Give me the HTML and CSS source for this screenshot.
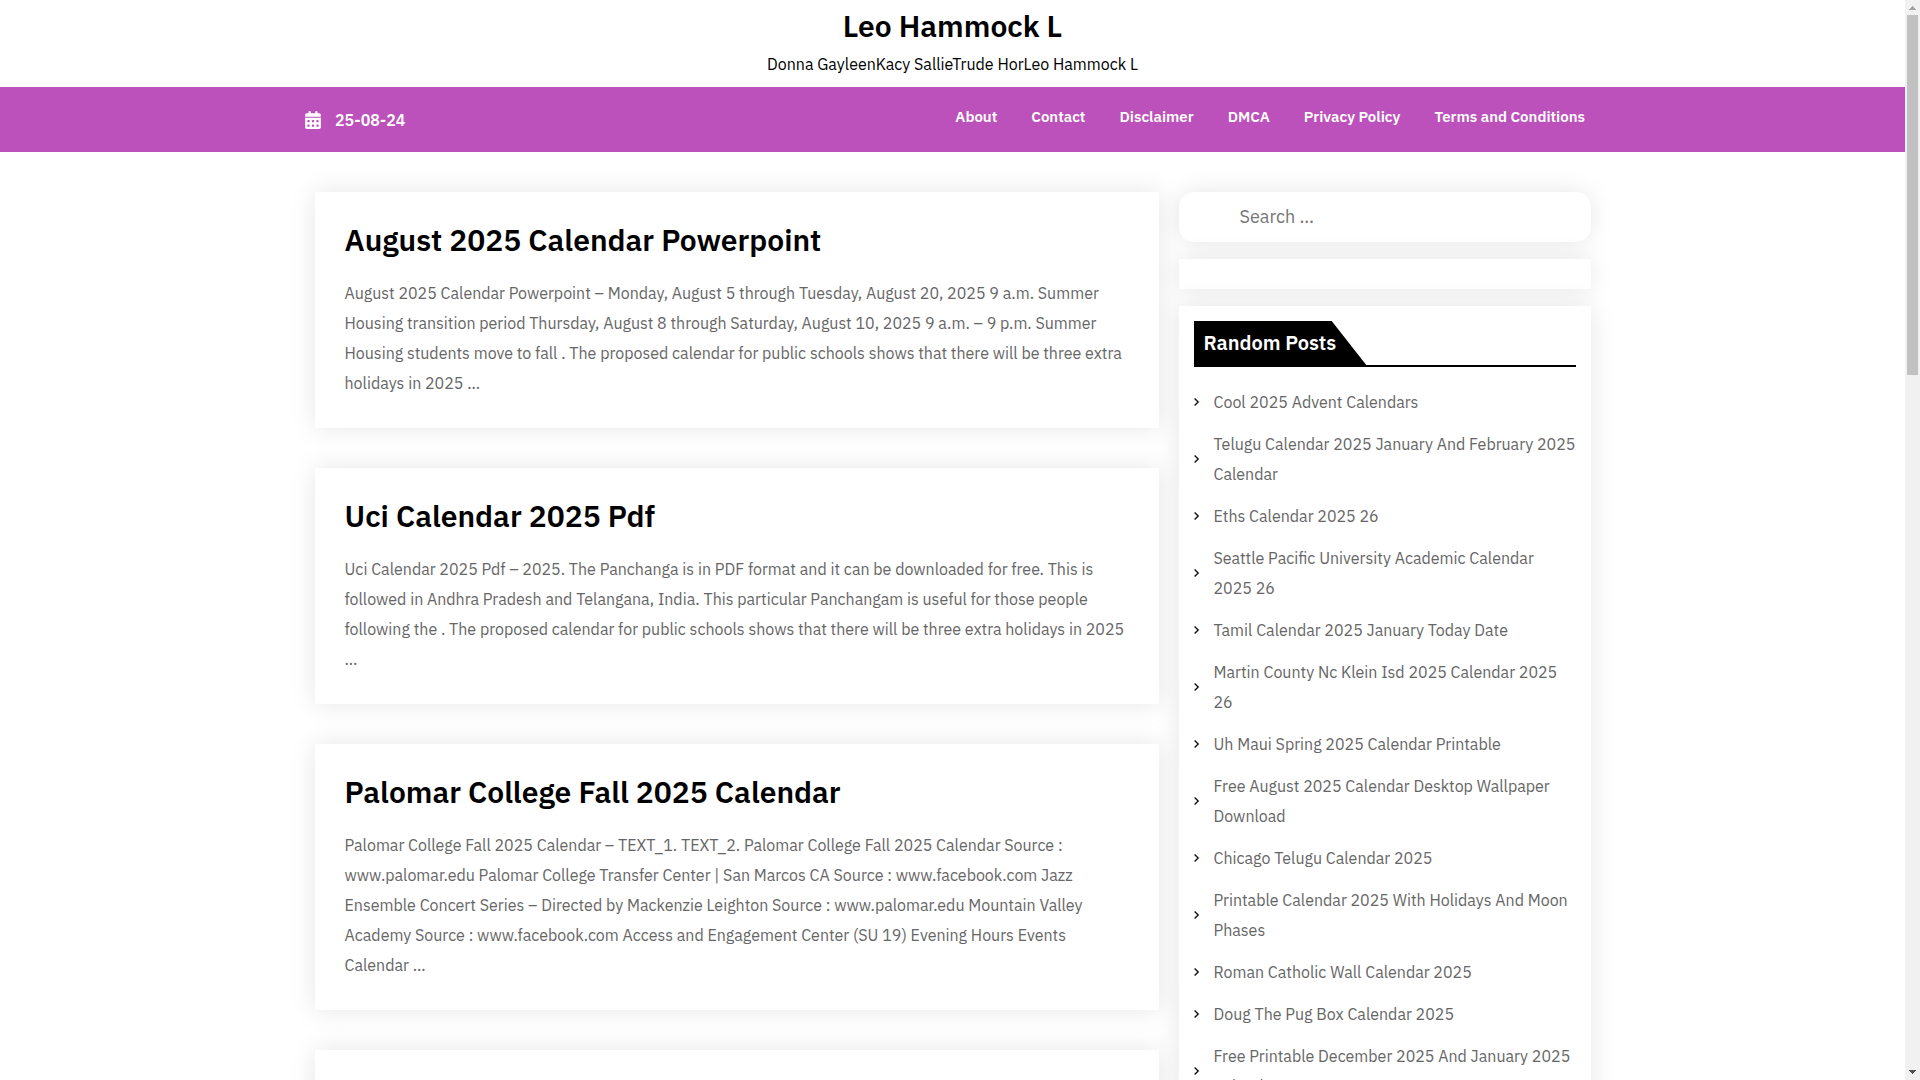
FILE: index.html
```
<!DOCTYPE html>
<html lang="en">
<head>
<meta charset="utf-8">
<meta name="viewport" content="width=device-width, initial-scale=1">
<title>Leo Hammock L</title>
<link rel="stylesheet" href="styles.css">
</head>
<body>
<div class="page">
  <header class="site-header">
    <h1 class="site-title"><a href="#">Leo Hammock L</a></h1>
    <p class="site-tagline">Donna GayleenKacy SallieTrude HorLeo Hammock L</p>
  </header>

  <div class="topbar">
    <div class="topbar-inner">
      <div class="date">
        <svg class="date-icon" viewBox="0 0 448 512" aria-hidden="true"><path fill="currentColor" d="M128 0c17.700 0 32 14.300 32 32V64H288V32c0-17.700 14.300-32 32-32s32 14.300 32 32V64h48c26.500 0 48 21.500 48 48v48H0V112C0 85.500 21.500 64 48 64H96V32c0-17.700 14.300-32 32-32zM0 192H448V464c0 26.500-21.500 48-48 48H48c-26.500 0-48-21.500-48-48V192zm64 80v32c0 8.800 7.200 16 16 16h32c8.800 0 16-7.200 16-16V272c0-8.800-7.200-16-16-16H80c-8.800 0-16 7.200-16 16zm128 0v32c0 8.800 7.200 16 16 16h32c8.800 0 16-7.200 16-16V272c0-8.800-7.200-16-16-16H208c-8.800 0-16 7.200-16 16zm144-16c-8.800 0-16 7.200-16 16v32c0 8.800 7.200 16 16 16h32c8.800 0 16-7.200 16-16V272c0-8.800-7.200-16-16-16H336zM64 400v32c0 8.800 7.200 16 16 16h32c8.800 0 16-7.200 16-16V400c0-8.800-7.200-16-16-16H80c-8.800 0-16 7.200-16 16zm144-16c-8.800 0-16 7.200-16 16v32c0 8.800 7.200 16 16 16h32c8.800 0 16-7.200 16-16V400c0-8.800-7.200-16-16-16H208zm112 16v32c0 8.800 7.200 16 16 16h32c8.800 0 16-7.200 16-16V400c0-8.800-7.200-16-16-16H336c-8.800 0-16 7.200-16 16z"/></svg>
        <span>25-08-24</span>
      </div>
      <nav class="menu" aria-label="Main">
        <a href="#">About</a>
        <a href="#">Contact</a>
        <a href="#">Disclaimer</a>
        <a href="#">DMCA</a>
        <a href="#">Privacy Policy</a>
        <a href="#">Terms and Conditions</a>
      </nav>
    </div>
  </div>

  <div class="content">
    <main class="posts">
      <article class="card">
        <h2 class="card-title"><a href="#">August 2025 Calendar Powerpoint</a></h2>
        <p class="card-text">August 2025 Calendar Powerpoint – Monday, August 5 through Tuesday, August 20, 2025 9 a.m. Summer Housing transition period Thursday, August 8 through Saturday, August 10, 2025 9 a.m. – 9 p.m. Summer Housing students move to fall . The proposed calendar for public schools shows that there will be three extra holidays in 2025 …</p>
      </article>
      <article class="card">
        <h2 class="card-title"><a href="#">Uci Calendar 2025 Pdf</a></h2>
        <p class="card-text">Uci Calendar 2025 Pdf – 2025. The Panchanga is in PDF format and it can be downloaded for free. This is followed in Andhra Pradesh and Telangana, India. This particular Panchangam is useful for those people following the . The proposed calendar for public schools shows that there will be three extra holidays in 2025 …</p>
      </article>
      <article class="card">
        <h2 class="card-title"><a href="#">Palomar College Fall 2025 Calendar</a></h2>
        <p class="card-text">Palomar College Fall 2025 Calendar – TEXT_1. TEXT_2. Palomar College Fall 2025 Calendar Source : www.palomar.edu Palomar College Transfer Center | San Marcos CA Source : www.facebook.com Jazz Ensemble Concert Series – Directed by Mackenzie Leighton Source : www.palomar.edu Mountain Valley Academy Source : www.facebook.com Access and Engagement Center (SU 19) Evening Hours Events Calendar …</p>
      </article>
      <article class="card card-next"></article>
    </main>

    <aside class="sidebar">
      <form class="search" role="search">
        <input class="search-input" type="search" placeholder="Search …" aria-label="Search">
      </form>
      <div class="widget"></div>
      <section class="widget">
        <div class="widget-head"><h2 class="widget-title">Random Posts</h2></div>
        <ul class="links">
          <li><a href="#">Cool 2025 Advent Calendars</a></li>
          <li><a href="#">Telugu Calendar 2025 January And February 2025 Calendar</a></li>
          <li><a href="#">Eths Calendar 2025 26</a></li>
          <li><a href="#">Seattle Pacific University Academic Calendar 2025 26</a></li>
          <li><a href="#">Tamil Calendar 2025 January Today Date</a></li>
          <li><a href="#">Martin County Nc Klein Isd 2025 Calendar 2025 26</a></li>
          <li><a href="#">Uh Maui Spring 2025 Calendar Printable</a></li>
          <li><a href="#">Free August 2025 Calendar Desktop Wallpaper Download</a></li>
          <li><a href="#">Chicago Telugu Calendar 2025</a></li>
          <li><a href="#">Printable Calendar 2025 With Holidays And Moon Phases</a></li>
          <li><a href="#">Roman Catholic Wall Calendar 2025</a></li>
          <li><a href="#">Doug The Pug Box Calendar 2025</a></li>
          <li><a href="#">Free Printable December 2025 And January 2025 Calendar</a></li>
        </ul>
      </section>
    </aside>
  </div>
</div>

<div class="scrollbar" aria-hidden="true">
  <svg class="scroll-arrow" viewBox="0 0 15 15" shape-rendering="crispEdges"><path fill="#a3a3a3" d="M7 6h1v1h1v1h1v1h1v1H4V9h1V8h1V7h1z"/></svg>
  <div class="scroll-track"><div class="scroll-thumb"></div></div>
  <svg class="scroll-arrow" viewBox="0 0 15 15" shape-rendering="crispEdges"><path fill="#505050" d="M4 5h7v1h-1v1H9v1H8v1H7V8H6V7H5V6H4z"/></svg>
</div>
</body>
</html>
```
FILE: styles.css
```
* {
  box-sizing: border-box;
}

body {
  display: grid;
  grid-template-columns: minmax(0, 1fr) 15px;
  height: 100vh;
  margin: 0;
  overflow: hidden;
  background: #fff;
  color: #666;
  font: 16px/30px "IBM Plex Sans", Roboto, sans-serif;
}

h1, h2, p, ul {
  margin: 0;
  padding: 0;
}

a {
  color: inherit;
  text-decoration: none;
}

.page {
  min-height: 0;
  overflow: hidden;
}

.site-header {
  padding: 8px 0;
  color: #000;
  text-align: center;
}

.site-title {
  margin-bottom: 5px;
  font-size: 30px;
  font-weight: 600;
  line-height: 36px;
}

.topbar {
  background: #bd51bc;
  color: #fff;
  font-weight: 600;
}

.topbar-inner {
  display: flex;
  justify-content: space-between;
  max-width: 1295px;
  margin: 0 auto;
  padding: 15px 15px 15px 0;
}

.date {
  display: flex;
  align-items: center;
  gap: 14px;
}

.date-icon {
  width: 16px;
  height: 18px;
}

.menu {
  display: flex;
  gap: 34px;
  height: 35px;
  font-size: 15px;
}

.content {
  display: grid;
  grid-template-columns: minmax(0, 844fr) minmax(0, 412fr);
  align-items: start;
  gap: 20px;
  max-width: 1276px;
  margin: 40px auto 0;
}

.posts {
  display: grid;
  gap: 40px;
}

.card,
.widget,
.search {
  background: #fff;
  box-shadow: 0 0 25px rgba(0, 0, 0, 0.1);
}

.card {
  padding: 30px;
}

.card-next {
  min-height: 236px;
}

.card-title {
  margin-bottom: 20px;
  color: #000;
  font-size: 30px;
  font-weight: 600;
  line-height: 36px;
}

.sidebar {
  display: grid;
  gap: 17px;
}

.search {
  border-radius: 15px;
}

.search-input {
  display: block;
  width: 100%;
  height: 50px;
  padding: 0 61px 2px;
  border: 0;
  border-radius: 15px;
  outline: 0;
  background: transparent;
  color: #666;
  font: inherit;
  font-size: 18px;
  appearance: none;
}

.search-input::placeholder {
  color: #757575;
}

.widget {
  padding: 15px;
}

.widget-head {
  margin-bottom: 20px;
  border-bottom: 2px solid #000;
}

.widget-title {
  width: fit-content;
  padding: 10px 30px 10px 10px;
  background: #000;
  clip-path: polygon(0 0, 80% 0, 100% 100%, 0 100%);
  color: #fff;
  font-size: 20px;
  font-weight: 600;
  line-height: 24px;
}

.links {
  display: grid;
  gap: 12px;
  list-style: none;
}

.links li {
  display: flex;
  align-items: center;
}

.links li::before {
  content: "";
  flex: none;
  width: 6px;
  height: 10px;
  margin-right: 14px;
  background: url("data:image/svg+xml,%3Csvg xmlns='http://www.w3.org/2000/svg' viewBox='0 0 6 10'%3E%3Cpath d='M.6 1.400 4.200 5 .6 8.600' fill='none' stroke='%23111' stroke-width='1.400'/%3E%3C/svg%3E") no-repeat;
}

.scrollbar {
  display: flex;
  flex-direction: column;
  background: #f1f1f1;
}

.scroll-arrow {
  flex: none;
  width: 15px;
  height: 15px;
}

.scroll-track {
  flex: 1;
  padding: 0 2px;
}

.scroll-thumb {
  height: 34.3%;
  background: #c1c1c1;
}
```
